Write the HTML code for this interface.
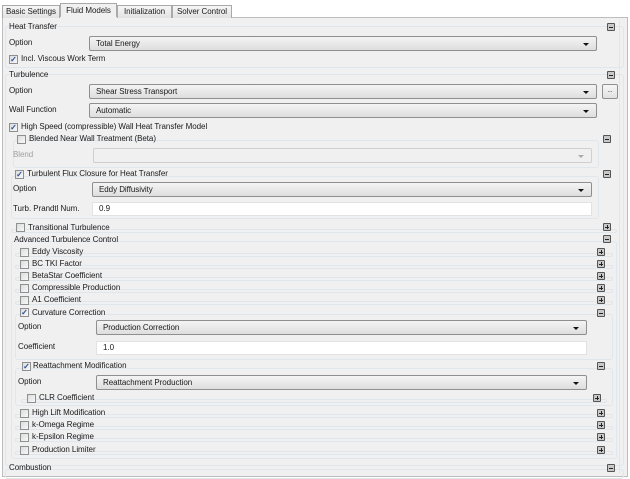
<!DOCTYPE html>
<html><head><meta charset="utf-8"><style>
*{box-sizing:border-box;margin:0;padding:0}
body{width:630px;height:473px;background:#fff;font-family:"Liberation Sans",sans-serif;font-size:8px;color:#1a1a1a;position:relative;overflow:hidden;letter-spacing:-0.05px}
div{position:absolute}
.t{line-height:10px;white-space:nowrap}
.tab{top:5px;height:13px;border:1px solid #a9a9a9;border-bottom:none;background:linear-gradient(#f6f6f6,#e2e2e2);text-align:center;line-height:12px}
.panel{left:2px;top:17px;width:626px;height:460px;background:#f0f0f0;border:1px solid #bdbdbd}
.g{border:1px solid #dfe6ec;border-radius:3px}
.cb{width:9px;height:9px;border:1px solid #8e8f8f;background:linear-gradient(135deg,#dcdcdc,#f8f8f8);font-size:8px;line-height:7px;text-align:center;color:#2a4f9a;font-weight:bold}
.cmb{height:15px;border:1px solid #8f8f8f;border-radius:2px;background:linear-gradient(#f4f4f4,#dedede);padding-left:6px;line-height:13px}
.cmb:after{content:"";position:absolute;right:7px;top:6px;border-left:3px solid transparent;border-right:3px solid transparent;border-top:3px solid #111}
.dis{border-color:#cfcfcf;background:#f0f0f0}
.dis:after{border-top-color:#aaa}
.inp{height:14px;background:#fff;border:1px solid #e2e2e2;padding-left:6px;line-height:12px}
.ic{width:8px;height:8px;border:1px solid #555;background:#c8c8c8;border-radius:1px}
.ic:before{content:"";position:absolute;left:1px;top:2.5px;width:4px;height:1px;background:#222}
.p:after{content:"";position:absolute;left:2.5px;top:1px;width:1px;height:4px;background:#222}
</style></head><body>
<div class="panel"></div>
<div style="left:619px;top:20px;width:1px;height:453px;background:#dfe6ec"></div>
<div class="tab t" style="left:2px;width:58px">Basic Settings</div>
<div class="tab t" style="left:60px;top:3px;height:15px;width:57px;background:#f0f0f0;line-height:14px">Fluid Models</div>
<div class="tab t" style="left:117px;width:55px">Initialization</div>
<div class="tab t" style="left:172px;width:60px">Solver Control</div>
<div style="left:60px;top:17px;width:57px;height:2px;background:#f0f0f0"></div>

<div class="g" style="left:5px;top:26px;width:619px;height:42px"></div>
<div class="t" style="left:9px;top:22px">Heat Transfer</div>
<div class="ic" style="left:607px;top:23px"></div>
<div class="t" style="left:9px;top:38px">Option</div>
<div class="cmb" style="left:89px;top:36px;width:508px">Total Energy</div>
<div class="cb" style="left:9px;top:55px">✓</div>
<div class="t" style="left:21px;top:54px">Incl. Viscous Work Term</div>

<div class="g" style="left:5px;top:74px;width:619px;height:392px"></div>
<div class="t" style="left:9px;top:70px">Turbulence</div>
<div class="ic" style="left:607px;top:71px"></div>
<div class="t" style="left:9px;top:86px">Option</div>
<div class="cmb" style="left:89px;top:84px;width:508px">Shear Stress Transport</div>
<div style="left:602px;top:84px;width:16px;height:15px;border:1px solid #8f8f8f;border-radius:2px;background:linear-gradient(#f6f6f6,#e0e0e0);font-size:6px;text-align:center;line-height:13px">...</div>
<div class="t" style="left:9px;top:105px">Wall Function</div>
<div class="cmb" style="left:89px;top:103px;width:508px">Automatic</div>
<div class="cb" style="left:9px;top:123px">✓</div>
<div class="t" style="left:21px;top:122px">High Speed (compressible) Wall Heat Transfer Model</div>

<div class="g" style="left:13px;top:140px;width:586px;height:28px"></div>
<div class="cb" style="left:17px;top:135px"></div>
<div class="t" style="left:29px;top:134px">Blended Near Wall Treatment (Beta)</div>
<div class="ic" style="left:603px;top:135px"></div>
<div class="t" style="left:13px;top:150px;color:#a0a0a0">Blend</div>
<div class="cmb dis" style="left:93px;top:148px;width:499px"></div>

<div class="g" style="left:11px;top:176px;width:588px;height:43px"></div>
<div class="cb" style="left:15px;top:170px">✓</div>
<div class="t" style="left:27px;top:169px">Turbulent Flux Closure for Heat Transfer</div>
<div class="ic" style="left:603px;top:170px"></div>
<div class="t" style="left:13px;top:184px">Option</div>
<div class="cmb" style="left:92px;top:182px;width:500px">Eddy Diffusivity</div>
<div class="t" style="left:13px;top:204px">Turb. Prandtl Num.</div>
<div class="inp" style="left:92px;top:202px;width:500px">0.9</div>

<div class="g" style="left:11px;top:229px;width:606px;height:4px;border-radius:3px"></div>
<div class="cb" style="left:16px;top:223px"></div>
<div class="t" style="left:28px;top:223px">Transitional Turbulence</div>
<div class="ic p" style="left:603px;top:223px"></div>

<div class="g" style="left:11px;top:241px;width:606px;height:218px"></div>
<div class="t" style="left:14px;top:235px">Advanced Turbulence Control</div>
<div class="ic" style="left:603px;top:235px"></div>

<div class="g" style="left:15px;top:253px;width:598px;height:4px"></div>
<div class="cb" style="left:20px;top:248px"></div><div class="t" style="left:32px;top:247px">Eddy Viscosity</div><div class="ic p" style="left:597px;top:248px"></div>
<div class="g" style="left:15px;top:265px;width:598px;height:4px"></div>
<div class="cb" style="left:20px;top:260px"></div><div class="t" style="left:32px;top:259px">BC TKI Factor</div><div class="ic p" style="left:597px;top:260px"></div>
<div class="g" style="left:15px;top:277px;width:598px;height:4px"></div>
<div class="cb" style="left:20px;top:272px"></div><div class="t" style="left:32px;top:271px">BetaStar Coefficient</div><div class="ic p" style="left:597px;top:272px"></div>
<div class="g" style="left:15px;top:289px;width:598px;height:4px"></div>
<div class="cb" style="left:20px;top:284px"></div><div class="t" style="left:32px;top:283px">Compressible Production</div><div class="ic p" style="left:597px;top:284px"></div>
<div class="g" style="left:15px;top:301px;width:598px;height:4px"></div>
<div class="cb" style="left:20px;top:296px"></div><div class="t" style="left:32px;top:295px">A1 Coefficient</div><div class="ic p" style="left:597px;top:296px"></div>

<div class="g" style="left:15px;top:314px;width:598px;height:46px"></div>
<div class="cb" style="left:20px;top:308px">✓</div><div class="t" style="left:32px;top:308px">Curvature Correction</div><div class="ic" style="left:597px;top:309px"></div>
<div class="t" style="left:18px;top:322px">Option</div>
<div class="cmb" style="left:96px;top:320px;width:491px">Production Correction</div>
<div class="t" style="left:18px;top:342px">Coefficient</div>
<div class="inp" style="left:96px;top:341px;width:491px">1.0</div>

<div class="g" style="left:15px;top:368px;width:598px;height:38px"></div>
<div class="cb" style="left:22px;top:362px">✓</div><div class="t" style="left:33px;top:361px">Reattachment Modification</div><div class="ic" style="left:597px;top:362px"></div>
<div class="t" style="left:18px;top:377px">Option</div>
<div class="cmb" style="left:96px;top:375px;width:491px">Reattachment Production</div>
<div class="g" style="left:21px;top:399px;width:586px;height:4px"></div>
<div class="cb" style="left:27px;top:394px"></div><div class="t" style="left:39px;top:393px">CLR Coefficient</div><div class="ic p" style="left:593px;top:394px"></div>

<div class="g" style="left:15px;top:414px;width:598px;height:4px"></div>
<div class="cb" style="left:20px;top:409px"></div><div class="t" style="left:32px;top:408px">High Lift Modification</div><div class="ic p" style="left:597px;top:409px"></div>
<div class="g" style="left:15px;top:426px;width:598px;height:4px"></div>
<div class="cb" style="left:20px;top:421px"></div><div class="t" style="left:32px;top:420px">k-Omega Regime</div><div class="ic p" style="left:597px;top:421px"></div>
<div class="g" style="left:15px;top:438px;width:598px;height:4px"></div>
<div class="cb" style="left:20px;top:433px"></div><div class="t" style="left:32px;top:432px">k-Epsilon Regime</div><div class="ic p" style="left:597px;top:433px"></div>
<div class="g" style="left:15px;top:451px;width:598px;height:4px"></div>
<div class="cb" style="left:20px;top:446px"></div><div class="t" style="left:32px;top:445px">Production Limiter</div><div class="ic p" style="left:597px;top:446px"></div>

<div class="g" style="left:5px;top:469px;width:619px;height:10px"></div>
<div class="t" style="left:9px;top:463px">Combustion</div>
<div class="ic" style="left:607px;top:464px"></div>
</body></html>
